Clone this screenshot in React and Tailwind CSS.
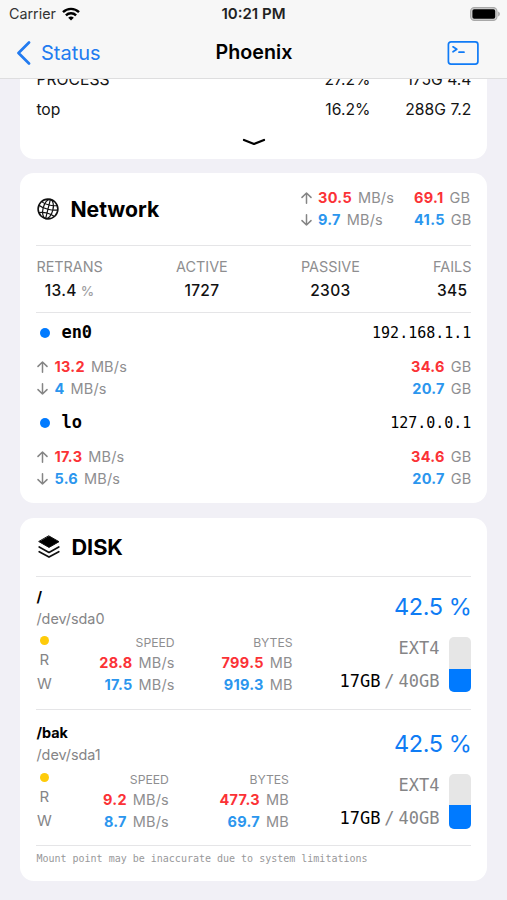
import React from 'react';
import clsx from 'clsx';

const interfaces = [
  { name: 'en0', ip: '192.168.1.1', up: '13.2', down: '4', sent: '34.6', received: '20.7' },
  { name: 'lo', ip: '127.0.0.1', up: '17.3', down: '5.6', sent: '34.6', received: '20.7' },
];

const connections = [
  { label: 'RETRANS', value: '13.4', unit: '%' },
  { label: 'ACTIVE', value: '1727' },
  { label: 'PASSIVE', value: '2303' },
  { label: 'FAILS', value: '345' },
];

const disks = [
  {
    mount: '/',
    device: '/dev/sda0',
    read: { speed: '28.8', bytes: '799.5' },
    write: { speed: '17.5', bytes: '919.3' },
  },
  {
    mount: '/bak',
    device: '/dev/sda1',
    read: { speed: '9.2', bytes: '477.3' },
    write: { speed: '8.7', bytes: '69.7' },
  },
];

const mono = "font-['DejaVu_Sans_Mono','Liberation_Mono',monospace]";

const WifiIcon = () => (
  <svg className="h-[14px] w-[18px]" viewBox="0 0 18 14" fill="none" stroke="#000" strokeWidth="2.4">
    <path d="M1 5.2a11.4 11.4 0 0 1 16 0" />
    <path d="M3.9 8.4a7.3 7.3 0 0 1 10.2 0" />
    <path d="M9 13.6 6.2 10.8a4 4 0 0 1 5.6 0z" fill="#000" stroke="none" />
  </svg>
);

const BatteryIcon = () => (
  <svg className="h-[14px] w-[30px]" viewBox="0 0 30 14">
    <rect x="0.6" y="0.6" width="26.4" height="12.8" rx="3.8" fill="#d0d0d0" stroke="#a8a8a8" strokeWidth="1.1" />
    <rect x="2.4" y="2.3" width="22.8" height="9.4" rx="1.8" fill="#000" />
    <path d="M28.2 4.6c1 .4 1.6 1.3 1.6 2.4s-.6 2-1.6 2.4z" fill="#a3a3a3" />
  </svg>
);

const GlobeIcon = () => (
  <svg className="h-[22px] w-[22px]" viewBox="0 0 22 22" fill="none" stroke="#111" strokeWidth="1.2">
    <circle cx="11" cy="11" r="9.9" strokeWidth="1.6" />
    <g transform="rotate(14 11 11)">
      <ellipse cx="11" cy="11" rx="5" ry="9.9" />
      <path d="M11 1.1v19.8M1.3 9.5c5 2.4 14.4 2.4 19.4 0M3 5.4c4.5 2 11.5 2 16 0M3 16.8c4.5-2.2 11.5-2.2 16 0" />
    </g>
  </svg>
);

const LayersIcon = () => (
  <svg className="h-[24px] w-[22px]" viewBox="0 0 22 24" fill="none" stroke="#111" strokeWidth="1.7" strokeLinecap="round" strokeLinejoin="round">
    <path d="M11 1 21 6.7 11 12.4 1 6.7z" fill="#000" strokeWidth="1" />
    <path d="M1.2 12 11 17.4l9.8-5.4M1.2 16.7l9.8 5.4 9.8-5.4" />
  </svg>
);

const TerminalIcon = () => (
  <svg className="h-6 w-8" viewBox="0 0 32 24" fill="none" stroke="#107bf6" strokeLinecap="round" strokeLinejoin="round">
    <rect x="1.4" y="0.9" width="29.5" height="22.2" rx="2.6" strokeWidth="1.7" />
    <path d="M6 5.8 9.8 8.3 6 10.8M12 11.2h5" strokeWidth="1.7" />
  </svg>
);

const Arrow = ({ down }) => (
  <svg
    className={clsx('ml-[1px] mr-[6px] h-3 w-[11px] shrink-0', down && 'rotate-180')}
    viewBox="0 0 11 12"
    fill="none"
    stroke="#858585"
    strokeWidth="1.5"
    strokeLinecap="round"
    strokeLinejoin="round"
  >
    <path d="M5.5 11.2V1M1 5.4 5.5 1 10 5.4" />
  </svg>
);

const Amount = ({ value, unit, down }) => (
  <span className="whitespace-nowrap text-[14.5px] leading-[22.4px] tracking-[0.15px] text-[#8e8e90]">
    <span className={clsx('mr-[6px] font-bold tracking-[0.3px]', down ? 'text-[#2b96ee]' : 'text-[#fb3236]')}>{value}</span>
    {unit}
  </span>
);

const Rate = ({ value, down }) => (
  <div className="flex items-center">
    <Arrow down={down} />
    <Amount value={value} unit="MB/s" down={down} />
  </div>
);

const Card = ({ className, children }) => (
  <section className={clsx('rounded-[14px] bg-white px-4', className)}>{children}</section>
);

const ProcessRow = ({ name, cpu, mem }) => (
  <div className="flex h-[30px] items-center text-[15.7px] text-[#151515]">
    <span className="flex-1">{name}</span>
    <span>{cpu}</span>
    <span className="w-[101px] text-right">{mem}</span>
  </div>
);

const Interface = ({ item }) => (
  <div className="h-[90px]">
    <div className={clsx('flex h-[39px] items-center', mono)}>
      <span className="ml-1 mr-[11px] h-[10px] w-[10px] rounded-full bg-[#007aff]" />
      <span className="flex-1 pt-[1px] text-[17px] font-bold text-black">{item.name}</span>
      <span className="pt-[1px] text-[15px] text-black">{item.ip}</span>
    </div>
    <div className="mt-[3.5px] flex justify-between">
      <div>
        <Rate value={item.up} />
        <Rate value={item.down} down />
      </div>
      <div className="flex flex-col items-end">
        <Amount value={item.sent} unit="GB" />
        <Amount value={item.received} unit="GB" down />
      </div>
    </div>
  </div>
);

const DiskColumn = ({ title, read, write, unit }) => (
  <div className="flex flex-col items-end pt-[1px]">
    <span className="text-[12.2px] leading-[19px] text-[#8e8e90]">{title}</span>
    <Amount value={read} unit={unit} />
    <Amount value={write} unit={unit} down />
  </div>
);

const Disk = ({ disk, first }) => (
  <div className={clsx('border-b border-[#e5e5e7]', first ? 'h-[132.5px]' : 'h-[136.5px] pt-[4px]')}>
    <div className="flex h-[55px] items-start justify-between pt-[9px]">
      <div className="-mt-[0.5px]">
        <div className="text-[14.4px] font-bold leading-[22px] text-black">{disk.mount}</div>
        <div className="text-[14.4px] leading-[22px] text-[#858587]">{disk.device}</div>
      </div>
      <div className="flex gap-[6px] pt-[6px] text-[23.5px] leading-[30px] tracking-[-0.4px] text-[#0f7cf4]">
        <span>42.5</span>
        <span>%</span>
      </div>
    </div>
    <div className="flex">
      <div className="flex flex-1 justify-between">
        <div className="flex w-[16px] flex-col items-center text-[15px] leading-6 text-[#858587]">
          <span className="mb-[3px] mt-[4px] h-[9px] w-[9px] rounded-full bg-[#fecb0a]" />
          <span>R</span>
          <span>W</span>
        </div>
        <DiskColumn title="SPEED" read={disk.read.speed} write={disk.write.speed} unit="MB/s" />
        <DiskColumn title="BYTES" read={disk.read.bytes} write={disk.write.bytes} unit="MB" />
        <div className={clsx('flex flex-col items-end text-[17px] leading-[33px] text-[#858587]', mono)}>
          <span>EXT4</span>
          <span className="flex">
            <span className="text-black">17GB</span>
            <span className="w-[18px] text-center">/</span>
            <span>40GB</span>
          </span>
        </div>
      </div>
      <div className="ml-[10px] mt-[5px] flex h-[55px] w-[22px] flex-col justify-end overflow-hidden rounded-[5px] bg-[#e6e6e6]">
        <div className="h-[42.5%] bg-[#007aff]" />
      </div>
    </div>
  </div>
);

const App = () => {
  return (
    <div className="h-[900px] w-[507px] overflow-hidden bg-[#f1f0f6] font-[Inter,sans-serif] text-black">
      <header className="relative z-10 h-[79px] border-b border-[#dededf] bg-[#f7f7f7]">
        <div className="grid h-[27px] grid-cols-[1fr_auto_1fr] items-center pl-[7px] pr-[7px] text-[14.3px]">
          <div className="flex items-center gap-[6px] pl-[2px] text-[#333]">
            Carrier
            <WifiIcon />
          </div>
          <div className="pt-[1px] text-center text-[15px] font-semibold text-[#222]">10:21 PM</div>
          <div className="flex justify-end">
            <BatteryIcon />
          </div>
        </div>
        <div className="grid h-[51.5px] grid-cols-[1fr_auto_1fr] items-center pl-4 pr-7">
          <div className="flex items-center gap-[10px] text-[20px] text-[#227bf0]">
            <svg className="h-6 w-[15px]" viewBox="0 0 15 24" fill="none" stroke="currentColor" strokeWidth="2.7" strokeLinecap="round" strokeLinejoin="round">
              <path d="M13 1.5 2.5 12 13 22.5" />
            </svg>
            Status
          </div>
          <h1 className="pl-[13px] text-center text-[19.7px] font-semibold">Phoenix</h1>
          <div className="flex justify-end">
            <TerminalIcon />
          </div>
        </div>
      </header>

      <main className="-mt-[13.8px] flex flex-col gap-[14.5px] pl-[20.4px] pr-[19.6px]">
        <Card className="h-[93.3px]">
          <ProcessRow name="PROCESS" cpu="27.2%" mem="175G 4.4" />
          <ProcessRow name="top" cpu="16.2%" mem="288G 7.2" />
          <svg className="mx-auto mt-[12px] h-[10px] w-6" viewBox="0 0 24 10" fill="none" stroke="#000" strokeWidth="2.2" strokeLinecap="round" strokeLinejoin="round">
            <path d="M2 3 12 7 22 3" />
          </svg>
        </Card>

        <Card className="h-[330px]">
          <div className="flex h-[72.5px] items-center border-b border-[#e5e5e7] pt-[1px]">
            <span className="ml-[1px]">
              <GlobeIcon />
            </span>
            <h2 className="ml-[11px] flex-1 pt-[1px] text-[21.2px] font-bold">Network</h2>
            <div>
              <Rate value="30.5" />
              <Rate value="9.7" down />
            </div>
            <div className="ml-5 flex flex-col">
              <Amount value="69.1" unit="GB" />
              <Amount value="41.5" unit="GB" down />
            </div>
          </div>
          <div className="flex h-[67.5px] justify-between border-b border-[#e5e5e7] pt-[9px]">
            {connections.map((c) => (
              <div key={c.label} className="flex flex-col items-center leading-6">
                <span className="text-[14.4px] text-[#8e8e90]">{c.label}</span>
                <span className="text-[15.5px] font-medium tracking-[0.3px] text-[#111]">
                  {c.value}
                  {c.unit && <span className="ml-1 text-[13.5px] text-[#a0a0a2]">{c.unit}</span>}
                </span>
              </div>
            ))}
          </div>
          {interfaces.map((item) => (
            <Interface key={item.name} item={item} />
          ))}
        </Card>

        <Card className="h-[363px]">
          <div className="flex h-[59.5px] items-center border-b border-[#e5e5e7] pt-[1px]">
            <span className="ml-[2px]">
              <LayersIcon />
            </span>
            <h2 className="ml-[11px] text-[21.7px] font-bold">DISK</h2>
          </div>
          {disks.map((disk, i) => (
            <Disk key={disk.device} disk={disk} first={i === 0} />
          ))}
          <p className={clsx('pt-[6px] text-[10px] leading-[14px] text-[#98989a]', mono)}>
            Mount point may be inaccurate due to system limitations
          </p>
        </Card>
      </main>
    </div>
  );
};

export default App;
